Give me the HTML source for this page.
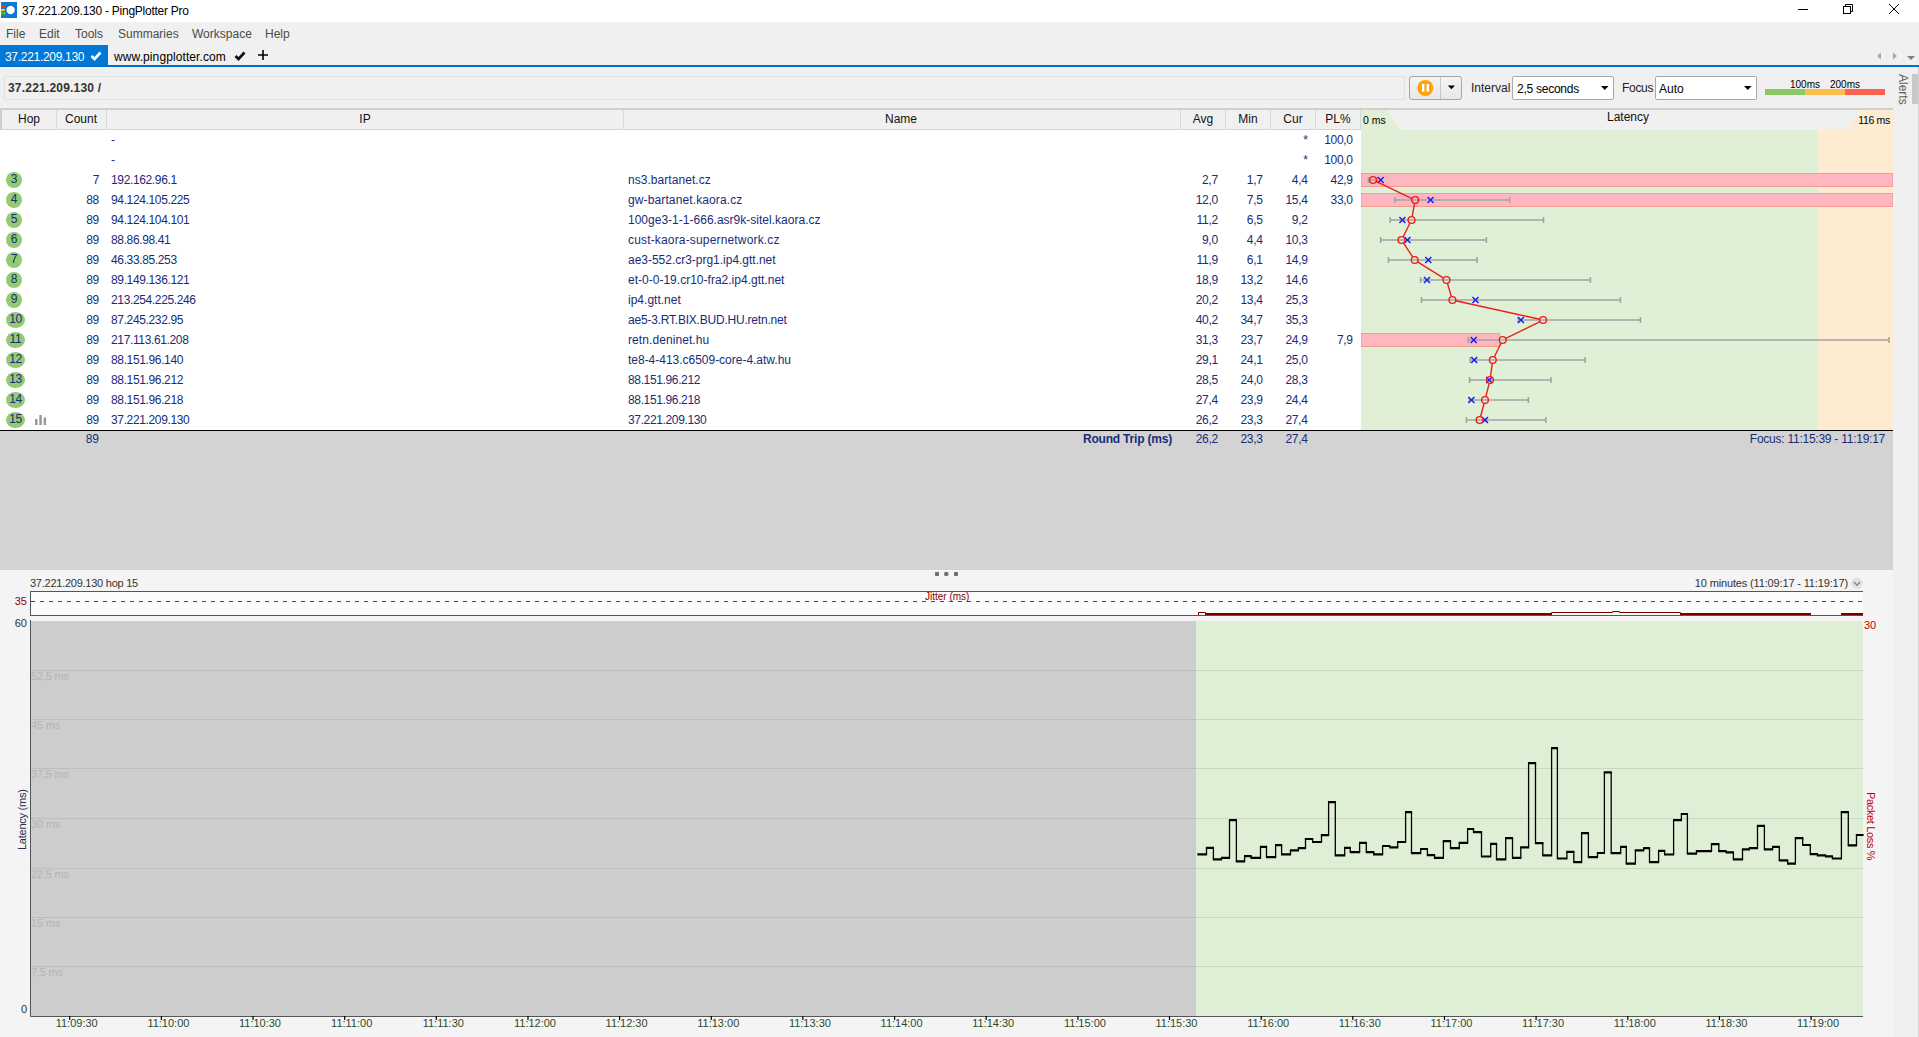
<!DOCTYPE html>
<html><head><meta charset="utf-8"><title>PingPlotter</title>
<style>
*{margin:0;padding:0;box-sizing:border-box}
html,body{width:1919px;height:1037px;overflow:hidden;background:#f0f0f0;font-family:"Liberation Sans",sans-serif;font-size:12px;color:#000}
.a{position:absolute;white-space:nowrap}
.n{color:#182c78}
.r{text-align:right}
.c{text-align:center}
</style></head><body>

<div class="a" style="left:0;top:0;width:1919px;height:22px;background:#fff"></div>
<svg class="a" style="left:0;top:0" width="20" height="20" viewBox="0 0 20 20"><rect x="1" y="2" width="16" height="16" fill="#0a7ad8"/><rect x="1" y="5.4" width="4.8" height="2.4" fill="#ff3010"/><rect x="1" y="9" width="3.8" height="2" fill="#ffc800"/><rect x="1" y="12" width="4.8" height="2.5" fill="#50c010"/><circle cx="10.6" cy="10" r="5.3" fill="#0068e8"/><circle cx="10.6" cy="10" r="4.2" fill="#fff"/></svg>
<div class="a" style="left:22px;top:3px;font-size:12px;line-height:16px;letter-spacing:-0.25px">37.221.209.130 - PingPlotter Pro</div>
<svg class="a" style="left:1790px;top:0" width="129" height="22" viewBox="1790 0 129 22"><line x1="1798" y1="9.5" x2="1808" y2="9.5" stroke="#000" stroke-width="1"/><rect x="1843.5" y="6.5" width="7" height="7" fill="#fff" stroke="#000" stroke-width="1"/><path d="M1845.5 6.5 V4.5 H1852.5 V11.5 H1850.5" fill="none" stroke="#000" stroke-width="1"/><path d="M1889 4 L1899 14 M1899 4 L1889 14" stroke="#000" stroke-width="1"/></svg>
<div class="a" style="left:6px;top:27px;line-height:15px;color:#4a4a4a">File</div>
<div class="a" style="left:39px;top:27px;line-height:15px;color:#4a4a4a">Edit</div>
<div class="a" style="left:75px;top:27px;line-height:15px;color:#4a4a4a">Tools</div>
<div class="a" style="left:118px;top:27px;line-height:15px;color:#4a4a4a">Summaries</div>
<div class="a" style="left:192px;top:27px;line-height:15px;color:#4a4a4a">Workspace</div>
<div class="a" style="left:265px;top:27px;line-height:15px;color:#4a4a4a">Help</div>
<div class="a" style="left:0;top:45px;width:108px;height:20px;background:#0078d7"></div>
<div class="a" style="left:5px;top:50px;color:#fff;line-height:15px;letter-spacing:-0.3px">37.221.209.130</div>
<svg class="a" style="left:90px;top:51px" width="12" height="10" viewBox="0 0 12 10"><path d="M1.5 5 L4.5 8 L10.5 1.5" fill="none" stroke="#fff" stroke-width="2.6"/></svg>
<div class="a" style="left:114px;top:50px;line-height:15px;letter-spacing:0.1px">www.pingplotter.com</div>
<svg class="a" style="left:234px;top:51px" width="12" height="10" viewBox="0 0 12 10"><path d="M1.5 5 L4.5 8 L10.5 1.5" fill="none" stroke="#111" stroke-width="2.6"/></svg>
<svg class="a" style="left:257px;top:49px" width="12" height="12" viewBox="0 0 12 12"><path d="M6 1 V11 M1 6 H11" stroke="#000" stroke-width="1.6"/></svg>
<svg class="a" style="left:1870px;top:50px" width="49" height="14" viewBox="1870 50 49 14"><path d="M1881 52.5 L1877 56 L1881 59.5Z" fill="#a8a8a8"/><path d="M1893 52.5 L1897 56 L1893 59.5Z" fill="#a8a8a8"/><path d="M1907 56 L1915 56 L1911 60Z" fill="#808080"/></svg>
<div class="a" style="left:0;top:65px;width:1919px;height:2px;background:#0070cd"></div>
<div class="a" style="left:4px;top:76px;width:1401px;height:24px;border:1px solid #e2e2e2;background:#f0f0f0"></div>
<div class="a" style="left:8px;top:81px;font-weight:bold;line-height:15px;color:#333;letter-spacing:0.2px">37.221.209.130 /</div>
<div class="a" style="left:1409px;top:76px;width:53px;height:24px;border:1px solid #a6a6a6;border-radius:3px;background:linear-gradient(#f4f4f4,#e8e8e8)"></div>
<div class="a" style="left:1440px;top:77px;width:1px;height:22px;background:#c8c8c8"></div>
<svg class="a" style="left:1416px;top:79px" width="48" height="18" viewBox="1416 79 48 18"><circle cx="1425.3" cy="88" r="8" fill="#ffa50a"/><rect x="1422" y="84" width="2.4" height="7.6" fill="#fff"/><rect x="1426.6" y="84" width="2.4" height="7.6" fill="#fff"/><path d="M1447.8 85.5 H1455 L1451.4 89.2Z" fill="#000"/></svg>
<div class="a" style="left:1471px;top:81px;line-height:15px;color:#222">Interval</div>
<div class="a" style="left:1512px;top:76px;width:102px;height:24px;border:1px solid #a9a9a9;border-radius:2px;background:#fff"></div>
<div class="a" style="left:1517px;top:82px;line-height:15px;letter-spacing:-0.25px">2,5 seconds</div>
<svg class="a" style="left:1600px;top:85px" width="10" height="6" viewBox="0 0 10 6"><path d="M1 1 H8.5 L4.75 5Z" fill="#000"/></svg>
<div class="a" style="left:1622px;top:81px;line-height:15px;color:#222;letter-spacing:-0.3px">Focus</div>
<div class="a" style="left:1655px;top:76px;width:102px;height:24px;border:1px solid #a9a9a9;border-radius:2px;background:#fff"></div>
<div class="a" style="left:1659px;top:82px;line-height:15px">Auto</div>
<svg class="a" style="left:1743px;top:85px" width="10" height="6" viewBox="0 0 10 6"><path d="M1 1 H8.5 L4.75 5Z" fill="#000"/></svg>
<div class="a" style="left:1765px;top:89px;width:40px;height:6px;background:#8cc864"></div>
<div class="a" style="left:1805px;top:89px;width:40px;height:6px;background:#fbbd4c"></div>
<div class="a" style="left:1845px;top:89px;width:40px;height:6px;background:#fb6350"></div>
<div class="a" style="left:1790px;top:78.5px;font-size:10px;line-height:12px">100ms</div>
<div class="a" style="left:1830px;top:78.5px;font-size:10px;line-height:12px">200ms</div>
<div class="a" style="left:1893px;top:67px;width:26px;height:970px;background:#f0f0f0"></div>
<div class="a" style="left:1912px;top:74px;width:6px;height:30px;background:#c8c8c8"></div>
<div class="a" style="left:1918px;top:67px;width:1px;height:970px;background:#d0d0d0"></div>
<div class="a" style="left:1897px;top:74px;width:12px;height:30px;"><div style="transform:rotate(90deg);transform-origin:0 0;position:absolute;left:12px;top:0;color:#606060;font-size:12px;line-height:12px">Alerts</div></div>
<div class="a" style="left:0;top:108px;width:1893px;height:2px;background:#cfcfcf"></div>
<div class="a" style="left:0;top:110px;width:1893px;height:20px;background:#f0f0f0;border-left:2px solid #cfcfcf"></div><div class="a" style="left:0;top:129px;width:1361px;height:1px;background:#d4d4d4"></div>
<div class="a" style="left:56px;top:110px;width:1px;height:19px;background:#d8d8d8"></div>
<div class="a" style="left:106px;top:110px;width:1px;height:19px;background:#d8d8d8"></div>
<div class="a" style="left:623px;top:110px;width:1px;height:19px;background:#d8d8d8"></div>
<div class="a" style="left:1180px;top:110px;width:1px;height:19px;background:#d8d8d8"></div>
<div class="a" style="left:1225px;top:110px;width:1px;height:19px;background:#d8d8d8"></div>
<div class="a" style="left:1270px;top:110px;width:1px;height:19px;background:#d8d8d8"></div>
<div class="a" style="left:1315px;top:110px;width:1px;height:19px;background:#d8d8d8"></div>
<div class="a" style="left:1360px;top:110px;width:1px;height:19px;background:#d8d8d8"></div>
<div class="a c" style="left:-21px;width:100px;top:112px;line-height:15px;color:#111">Hop</div>
<div class="a c" style="left:31px;width:100px;top:112px;line-height:15px;color:#111">Count</div>
<div class="a c" style="left:315px;width:100px;top:112px;line-height:15px;color:#111">IP</div>
<div class="a c" style="left:851px;width:100px;top:112px;line-height:15px;color:#111">Name</div>
<div class="a c" style="left:1153px;width:100px;top:112px;line-height:15px;color:#111">Avg</div>
<div class="a c" style="left:1198px;width:100px;top:112px;line-height:15px;color:#111">Min</div>
<div class="a c" style="left:1243px;width:100px;top:112px;line-height:15px;color:#111">Cur</div>
<div class="a c" style="left:1288px;width:100px;top:112px;line-height:15px;color:#111">PL%</div>
<div class="a" style="left:0;top:130px;width:1361px;height:300px;background:#fff"></div>
<div class="a n" style="left:111px;top:133px;line-height:15px;letter-spacing:-0.36px">-</div>
<div class="a r n" style="left:1247.6px;width:60px;top:133px;line-height:15px;letter-spacing:-0.3px">*</div>
<div class="a r n" style="left:1292.7px;width:60px;top:133px;line-height:15px;letter-spacing:-0.3px">100,0</div>
<div class="a n" style="left:111px;top:153px;line-height:15px;letter-spacing:-0.36px">-</div>
<div class="a r n" style="left:1247.6px;width:60px;top:153px;line-height:15px;letter-spacing:-0.3px">*</div>
<div class="a r n" style="left:1292.7px;width:60px;top:153px;line-height:15px;letter-spacing:-0.3px">100,0</div>
<div class="a c n" style="left:6px;top:172px;width:16px;height:16px;border-radius:50%;background:#92cb72;line-height:15px;font-size:12px;letter-spacing:-0.3px">3</div>
<div class="a r n" style="left:50px;width:49px;top:173px;line-height:15px;letter-spacing:-0.3px">7</div>
<div class="a n" style="left:111px;top:173px;line-height:15px;letter-spacing:-0.36px">192.162.96.1</div>
<div class="a n" style="left:628px;top:173px;line-height:15px;letter-spacing:0.048px">ns3.bartanet.cz</div>
<div class="a r n" style="left:1157.8px;width:60px;top:173px;line-height:15px;letter-spacing:-0.3px">2,7</div>
<div class="a r n" style="left:1202.6px;width:60px;top:173px;line-height:15px;letter-spacing:-0.3px">1,7</div>
<div class="a r n" style="left:1247.6px;width:60px;top:173px;line-height:15px;letter-spacing:-0.3px">4,4</div>
<div class="a r n" style="left:1292.7px;width:60px;top:173px;line-height:15px;letter-spacing:-0.3px">42,9</div>
<div class="a c n" style="left:6px;top:192px;width:16px;height:16px;border-radius:50%;background:#92cb72;line-height:15px;font-size:12px;letter-spacing:-0.3px">4</div>
<div class="a r n" style="left:50px;width:49px;top:193px;line-height:15px;letter-spacing:-0.3px">88</div>
<div class="a n" style="left:111px;top:193px;line-height:15px;letter-spacing:-0.36px">94.124.105.225</div>
<div class="a n" style="left:628px;top:193px;line-height:15px;letter-spacing:0.121px">gw-bartanet.kaora.cz</div>
<div class="a r n" style="left:1157.8px;width:60px;top:193px;line-height:15px;letter-spacing:-0.3px">12,0</div>
<div class="a r n" style="left:1202.6px;width:60px;top:193px;line-height:15px;letter-spacing:-0.3px">7,5</div>
<div class="a r n" style="left:1247.6px;width:60px;top:193px;line-height:15px;letter-spacing:-0.3px">15,4</div>
<div class="a r n" style="left:1292.7px;width:60px;top:193px;line-height:15px;letter-spacing:-0.3px">33,0</div>
<div class="a c n" style="left:6px;top:212px;width:16px;height:16px;border-radius:50%;background:#92cb72;line-height:15px;font-size:12px;letter-spacing:-0.3px">5</div>
<div class="a r n" style="left:50px;width:49px;top:213px;line-height:15px;letter-spacing:-0.3px">89</div>
<div class="a n" style="left:111px;top:213px;line-height:15px;letter-spacing:-0.36px">94.124.104.101</div>
<div class="a n" style="left:628px;top:213px;line-height:15px;letter-spacing:0.012px">100ge3-1-1-666.asr9k-sitel.kaora.cz</div>
<div class="a r n" style="left:1157.8px;width:60px;top:213px;line-height:15px;letter-spacing:-0.3px">11,2</div>
<div class="a r n" style="left:1202.6px;width:60px;top:213px;line-height:15px;letter-spacing:-0.3px">6,5</div>
<div class="a r n" style="left:1247.6px;width:60px;top:213px;line-height:15px;letter-spacing:-0.3px">9,2</div>
<div class="a c n" style="left:6px;top:232px;width:16px;height:16px;border-radius:50%;background:#92cb72;line-height:15px;font-size:12px;letter-spacing:-0.3px">6</div>
<div class="a r n" style="left:50px;width:49px;top:233px;line-height:15px;letter-spacing:-0.3px">89</div>
<div class="a n" style="left:111px;top:233px;line-height:15px;letter-spacing:-0.36px">88.86.98.41</div>
<div class="a n" style="left:628px;top:233px;line-height:15px;letter-spacing:0.165px">cust-kaora-supernetwork.cz</div>
<div class="a r n" style="left:1157.8px;width:60px;top:233px;line-height:15px;letter-spacing:-0.3px">9,0</div>
<div class="a r n" style="left:1202.6px;width:60px;top:233px;line-height:15px;letter-spacing:-0.3px">4,4</div>
<div class="a r n" style="left:1247.6px;width:60px;top:233px;line-height:15px;letter-spacing:-0.3px">10,3</div>
<div class="a c n" style="left:6px;top:252px;width:16px;height:16px;border-radius:50%;background:#92cb72;line-height:15px;font-size:12px;letter-spacing:-0.3px">7</div>
<div class="a r n" style="left:50px;width:49px;top:253px;line-height:15px;letter-spacing:-0.3px">89</div>
<div class="a n" style="left:111px;top:253px;line-height:15px;letter-spacing:-0.36px">46.33.85.253</div>
<div class="a n" style="left:628px;top:253px;line-height:15px;letter-spacing:-0.018px">ae3-552.cr3-prg1.ip4.gtt.net</div>
<div class="a r n" style="left:1157.8px;width:60px;top:253px;line-height:15px;letter-spacing:-0.3px">11,9</div>
<div class="a r n" style="left:1202.6px;width:60px;top:253px;line-height:15px;letter-spacing:-0.3px">6,1</div>
<div class="a r n" style="left:1247.6px;width:60px;top:253px;line-height:15px;letter-spacing:-0.3px">14,9</div>
<div class="a c n" style="left:6px;top:272px;width:16px;height:16px;border-radius:50%;background:#92cb72;line-height:15px;font-size:12px;letter-spacing:-0.3px">8</div>
<div class="a r n" style="left:50px;width:49px;top:273px;line-height:15px;letter-spacing:-0.3px">89</div>
<div class="a n" style="left:111px;top:273px;line-height:15px;letter-spacing:-0.36px">89.149.136.121</div>
<div class="a n" style="left:628px;top:273px;line-height:15px;letter-spacing:0.011px">et-0-0-19.cr10-fra2.ip4.gtt.net</div>
<div class="a r n" style="left:1157.8px;width:60px;top:273px;line-height:15px;letter-spacing:-0.3px">18,9</div>
<div class="a r n" style="left:1202.6px;width:60px;top:273px;line-height:15px;letter-spacing:-0.3px">13,2</div>
<div class="a r n" style="left:1247.6px;width:60px;top:273px;line-height:15px;letter-spacing:-0.3px">14,6</div>
<div class="a c n" style="left:6px;top:292px;width:16px;height:16px;border-radius:50%;background:#92cb72;line-height:15px;font-size:12px;letter-spacing:-0.3px">9</div>
<div class="a r n" style="left:50px;width:49px;top:293px;line-height:15px;letter-spacing:-0.3px">89</div>
<div class="a n" style="left:111px;top:293px;line-height:15px;letter-spacing:-0.36px">213.254.225.246</div>
<div class="a n" style="left:628px;top:293px;line-height:15px;letter-spacing:0.011px">ip4.gtt.net</div>
<div class="a r n" style="left:1157.8px;width:60px;top:293px;line-height:15px;letter-spacing:-0.3px">20,2</div>
<div class="a r n" style="left:1202.6px;width:60px;top:293px;line-height:15px;letter-spacing:-0.3px">13,4</div>
<div class="a r n" style="left:1247.6px;width:60px;top:293px;line-height:15px;letter-spacing:-0.3px">25,3</div>
<div class="a c n" style="left:6px;top:312px;width:19px;height:16px;border-radius:50%;background:#92cb72;line-height:15px;font-size:12px;letter-spacing:-0.3px">10</div>
<div class="a r n" style="left:50px;width:49px;top:313px;line-height:15px;letter-spacing:-0.3px">89</div>
<div class="a n" style="left:111px;top:313px;line-height:15px;letter-spacing:-0.36px">87.245.232.95</div>
<div class="a n" style="left:628px;top:313px;line-height:15px;letter-spacing:-0.212px">ae5-3.RT.BIX.BUD.HU.retn.net</div>
<div class="a r n" style="left:1157.8px;width:60px;top:313px;line-height:15px;letter-spacing:-0.3px">40,2</div>
<div class="a r n" style="left:1202.6px;width:60px;top:313px;line-height:15px;letter-spacing:-0.3px">34,7</div>
<div class="a r n" style="left:1247.6px;width:60px;top:313px;line-height:15px;letter-spacing:-0.3px">35,3</div>
<div class="a c n" style="left:6px;top:332px;width:19px;height:16px;border-radius:50%;background:#92cb72;line-height:15px;font-size:12px;letter-spacing:-0.3px">11</div>
<div class="a r n" style="left:50px;width:49px;top:333px;line-height:15px;letter-spacing:-0.3px">89</div>
<div class="a n" style="left:111px;top:333px;line-height:15px;letter-spacing:-0.36px">217.113.61.208</div>
<div class="a n" style="left:628px;top:333px;line-height:15px;letter-spacing:0.082px">retn.deninet.hu</div>
<div class="a r n" style="left:1157.8px;width:60px;top:333px;line-height:15px;letter-spacing:-0.3px">31,3</div>
<div class="a r n" style="left:1202.6px;width:60px;top:333px;line-height:15px;letter-spacing:-0.3px">23,7</div>
<div class="a r n" style="left:1247.6px;width:60px;top:333px;line-height:15px;letter-spacing:-0.3px">24,9</div>
<div class="a r n" style="left:1292.7px;width:60px;top:333px;line-height:15px;letter-spacing:-0.3px">7,9</div>
<div class="a c n" style="left:6px;top:352px;width:19px;height:16px;border-radius:50%;background:#92cb72;line-height:15px;font-size:12px;letter-spacing:-0.3px">12</div>
<div class="a r n" style="left:50px;width:49px;top:353px;line-height:15px;letter-spacing:-0.3px">89</div>
<div class="a n" style="left:111px;top:353px;line-height:15px;letter-spacing:-0.36px">88.151.96.140</div>
<div class="a n" style="left:628px;top:353px;line-height:15px;letter-spacing:-0.017px">te8-4-413.c6509-core-4.atw.hu</div>
<div class="a r n" style="left:1157.8px;width:60px;top:353px;line-height:15px;letter-spacing:-0.3px">29,1</div>
<div class="a r n" style="left:1202.6px;width:60px;top:353px;line-height:15px;letter-spacing:-0.3px">24,1</div>
<div class="a r n" style="left:1247.6px;width:60px;top:353px;line-height:15px;letter-spacing:-0.3px">25,0</div>
<div class="a c n" style="left:6px;top:372px;width:19px;height:16px;border-radius:50%;background:#92cb72;line-height:15px;font-size:12px;letter-spacing:-0.3px">13</div>
<div class="a r n" style="left:50px;width:49px;top:373px;line-height:15px;letter-spacing:-0.3px">89</div>
<div class="a n" style="left:111px;top:373px;line-height:15px;letter-spacing:-0.36px">88.151.96.212</div>
<div class="a n" style="left:628px;top:373px;line-height:15px;letter-spacing:-0.360px">88.151.96.212</div>
<div class="a r n" style="left:1157.8px;width:60px;top:373px;line-height:15px;letter-spacing:-0.3px">28,5</div>
<div class="a r n" style="left:1202.6px;width:60px;top:373px;line-height:15px;letter-spacing:-0.3px">24,0</div>
<div class="a r n" style="left:1247.6px;width:60px;top:373px;line-height:15px;letter-spacing:-0.3px">28,3</div>
<div class="a c n" style="left:6px;top:392px;width:19px;height:16px;border-radius:50%;background:#92cb72;line-height:15px;font-size:12px;letter-spacing:-0.3px">14</div>
<div class="a r n" style="left:50px;width:49px;top:393px;line-height:15px;letter-spacing:-0.3px">89</div>
<div class="a n" style="left:111px;top:393px;line-height:15px;letter-spacing:-0.36px">88.151.96.218</div>
<div class="a n" style="left:628px;top:393px;line-height:15px;letter-spacing:-0.360px">88.151.96.218</div>
<div class="a r n" style="left:1157.8px;width:60px;top:393px;line-height:15px;letter-spacing:-0.3px">27,4</div>
<div class="a r n" style="left:1202.6px;width:60px;top:393px;line-height:15px;letter-spacing:-0.3px">23,9</div>
<div class="a r n" style="left:1247.6px;width:60px;top:393px;line-height:15px;letter-spacing:-0.3px">24,4</div>
<div class="a c n" style="left:6px;top:412px;width:19px;height:16px;border-radius:50%;background:#92cb72;line-height:15px;font-size:12px;letter-spacing:-0.3px">15</div>
<div class="a r n" style="left:50px;width:49px;top:413px;line-height:15px;letter-spacing:-0.3px">89</div>
<div class="a n" style="left:111px;top:413px;line-height:15px;letter-spacing:-0.36px">37.221.209.130</div>
<div class="a n" style="left:628px;top:413px;line-height:15px;letter-spacing:-0.360px">37.221.209.130</div>
<div class="a r n" style="left:1157.8px;width:60px;top:413px;line-height:15px;letter-spacing:-0.3px">26,2</div>
<div class="a r n" style="left:1202.6px;width:60px;top:413px;line-height:15px;letter-spacing:-0.3px">23,3</div>
<div class="a r n" style="left:1247.6px;width:60px;top:413px;line-height:15px;letter-spacing:-0.3px">27,4</div>
<svg class="a" style="left:34px;top:414px" width="14" height="12" viewBox="34 414 14 12"><rect x="35" y="419" width="2.5" height="6" fill="#9a9a9a"/><rect x="39.3" y="415" width="2.5" height="10" fill="#9a9a9a"/><rect x="43.6" y="417.5" width="2.5" height="7.5" fill="#9a9a9a"/></svg>
<svg class="a" style="left:1361px;top:110px" width="532" height="320" viewBox="1361 110 532 320"><path d="M1361 110 H1386.5 L1400.5 130 H1361Z" fill="#dff0d6"/><rect x="1361" y="130" width="457" height="300" fill="#dff0d6"/><rect x="1818" y="130" width="75" height="300" fill="#fdebd2"/><path d="M1893 110 H1862 L1848 130 H1893Z" fill="#fdebd2"/><rect x="1361" y="173.5" width="532.0" height="13" fill="#ffb6c1" stroke="#f2907e" stroke-width="0.8"/><rect x="1361" y="193.5" width="532.0" height="13" fill="#ffb6c1" stroke="#f2907e" stroke-width="0.8"/><rect x="1361" y="333.5" width="138.3" height="13" fill="#ffb6c1" stroke="#f2907e" stroke-width="0.8"/><path d="M1368.4 180 H1377.0 M1368.4 177 V183 M1377.0 177 V183" stroke="#a3a3a3" stroke-width="1.6" fill="none"/><path d="M1377.7 177 L1383.7 183 M1383.7 177 L1377.7 183" stroke="#1a1aff" stroke-width="1.5"/><path d="M1394.7 200 H1509.6 M1394.7 197 V203 M1509.6 197 V203" stroke="#a3a3a3" stroke-width="1.6" fill="none"/><path d="M1427.6 197 L1433.6 203 M1433.6 197 L1427.6 203" stroke="#1a1aff" stroke-width="1.5"/><path d="M1390.2 220 H1543.5 M1390.2 217 V223 M1543.5 217 V223" stroke="#a3a3a3" stroke-width="1.6" fill="none"/><path d="M1399.4 217 L1405.4 223 M1405.4 217 L1399.4 223" stroke="#1a1aff" stroke-width="1.5"/><path d="M1380.7 240 H1486.3 M1380.7 237 V243 M1486.3 237 V243" stroke="#a3a3a3" stroke-width="1.6" fill="none"/><path d="M1404.4 237 L1410.4 243 M1410.4 237 L1404.4 243" stroke="#1a1aff" stroke-width="1.5"/><path d="M1388.4 260 H1477.0 M1388.4 257 V263 M1477.0 257 V263" stroke="#a3a3a3" stroke-width="1.6" fill="none"/><path d="M1425.3 257 L1431.3 263 M1431.3 257 L1425.3 263" stroke="#1a1aff" stroke-width="1.5"/><path d="M1420.6 280 H1590.4 M1420.6 277 V283 M1590.4 277 V283" stroke="#a3a3a3" stroke-width="1.6" fill="none"/><path d="M1424.0 277 L1430.0 283 M1430.0 277 L1424.0 283" stroke="#1a1aff" stroke-width="1.5"/><path d="M1421.5 300 H1620.4 M1421.5 297 V303 M1620.4 297 V303" stroke="#a3a3a3" stroke-width="1.6" fill="none"/><path d="M1472.5 297 L1478.5 303 M1478.5 297 L1472.5 303" stroke="#1a1aff" stroke-width="1.5"/><path d="M1518.2 320 H1640.5 M1518.2 317 V323 M1640.5 317 V323" stroke="#a3a3a3" stroke-width="1.6" fill="none"/><path d="M1517.9 317 L1523.9 323 M1523.9 317 L1517.9 323" stroke="#1a1aff" stroke-width="1.5"/><path d="M1468.3 340 H1889.0 M1468.3 337 V343 M1889.0 337 V343" stroke="#a3a3a3" stroke-width="1.6" fill="none"/><path d="M1470.7 337 L1476.7 343 M1476.7 337 L1470.7 343" stroke="#1a1aff" stroke-width="1.5"/><path d="M1470.1 360 H1585.2 M1470.1 357 V363 M1585.2 357 V363" stroke="#a3a3a3" stroke-width="1.6" fill="none"/><path d="M1471.2 357 L1477.2 363 M1477.2 357 L1471.2 363" stroke="#1a1aff" stroke-width="1.5"/><path d="M1469.6 380 H1551.0 M1469.6 377 V383 M1551.0 377 V383" stroke="#a3a3a3" stroke-width="1.6" fill="none"/><path d="M1486.1 377 L1492.1 383 M1492.1 377 L1486.1 383" stroke="#1a1aff" stroke-width="1.5"/><path d="M1469.2 400 H1528.3 M1469.2 397 V403 M1528.3 397 V403" stroke="#a3a3a3" stroke-width="1.6" fill="none"/><path d="M1468.4 397 L1474.4 403 M1474.4 397 L1468.4 403" stroke="#1a1aff" stroke-width="1.5"/><path d="M1466.4 420 H1545.8 M1466.4 417 V423 M1545.8 417 V423" stroke="#a3a3a3" stroke-width="1.6" fill="none"/><path d="M1482.0 417 L1488.0 423 M1488.0 417 L1482.0 423" stroke="#1a1aff" stroke-width="1.5"/><path d="M1376.03 181.46 L1412.08 198.54 M1414.55 203.35 L1412.13 216.65 M1410.01 223.04 L1403.06 236.96 M1403.41 242.84 L1412.83 257.16 M1417.58 261.81 L1443.59 278.19 M1447.43 283.26 L1451.41 296.74 M1455.69 300.73 L1539.81 319.27 M1540.08 321.51 L1505.79 338.49 M1501.22 343.04 L1494.27 356.96 M1492.30 363.37 L1490.49 376.63 M1489.21 383.30 L1485.86 396.70 M1484.15 403.28 L1480.49 416.72 " fill="none" stroke="#f21c1c" stroke-width="1.4"/><circle cx="1373.0" cy="180" r="3.4" fill="none" stroke="#f21c1c" stroke-width="1.4"/><circle cx="1415.2" cy="200" r="3.4" fill="none" stroke="#f21c1c" stroke-width="1.4"/><circle cx="1411.5" cy="220" r="3.4" fill="none" stroke="#f21c1c" stroke-width="1.4"/><circle cx="1401.5" cy="240" r="3.4" fill="none" stroke="#f21c1c" stroke-width="1.4"/><circle cx="1414.7" cy="260" r="3.4" fill="none" stroke="#f21c1c" stroke-width="1.4"/><circle cx="1446.5" cy="280" r="3.4" fill="none" stroke="#f21c1c" stroke-width="1.4"/><circle cx="1452.4" cy="300" r="3.4" fill="none" stroke="#f21c1c" stroke-width="1.4"/><circle cx="1543.1" cy="320" r="3.4" fill="none" stroke="#f21c1c" stroke-width="1.4"/><circle cx="1502.7" cy="340" r="3.4" fill="none" stroke="#f21c1c" stroke-width="1.4"/><circle cx="1492.8" cy="360" r="3.4" fill="none" stroke="#f21c1c" stroke-width="1.4"/><circle cx="1490.0" cy="380" r="3.4" fill="none" stroke="#f21c1c" stroke-width="1.4"/><circle cx="1485.0" cy="400" r="3.4" fill="none" stroke="#f21c1c" stroke-width="1.4"/><circle cx="1479.6" cy="420" r="3.4" fill="none" stroke="#f21c1c" stroke-width="1.4"/></svg>
<div class="a" style="left:1363px;top:113px;font-size:10.5px;line-height:14px">0 ms</div>
<div class="a" style="left:1607px;top:110px;line-height:15px;color:#111">Latency</div>
<div class="a r" style="left:1830px;width:60px;top:113px;font-size:10.5px;line-height:14px;letter-spacing:-0.3px">116 ms</div>
<div class="a" style="left:0;top:429.6px;width:1893px;height:1.5px;background:#000"></div>
<div class="a" style="left:0;top:431px;width:1893px;height:139px;background:#d3d3d3"></div>
<div class="a r n" style="left:50px;width:49px;top:432px;line-height:15px">89</div>
<div class="a r n" style="left:972px;width:200px;top:432px;line-height:15px;font-weight:bold;letter-spacing:-0.2px">Round Trip (ms)</div>
<div class="a r n" style="left:1157.8px;width:60px;top:432px;line-height:15px;letter-spacing:-0.3px">26,2</div>
<div class="a r n" style="left:1202.6px;width:60px;top:432px;line-height:15px;letter-spacing:-0.3px">23,3</div>
<div class="a r n" style="left:1247.6px;width:60px;top:432px;line-height:15px;letter-spacing:-0.3px">27,4</div>
<div class="a r n" style="left:1600px;width:285px;top:432px;line-height:15px;letter-spacing:-0.25px">Focus: 11:15:39 - 11:19:17</div>
<div class="a" style="left:0;top:570px;width:1893px;height:467px;background:#f4f4f4"></div>
<svg class="a" style="left:930px;top:570px" width="32" height="8" viewBox="930 570 32 8"><rect x="935" y="572" width="4" height="4" rx="0.8" fill="#6e6e6e"/><circle cx="946.3" cy="574" r="2.3" fill="#6e6e6e"/><rect x="954" y="572" width="4" height="4" rx="0.8" fill="#6e6e6e"/></svg>
<div class="a" style="left:30px;top:577px;font-size:11px;line-height:13px;color:#333;letter-spacing:-0.25px">37.221.209.130 hop 15</div>
<div class="a r" style="left:1600px;width:248px;top:577px;font-size:11px;line-height:13px;color:#333;letter-spacing:-0.15px">10 minutes (11:09:17 - 11:19:17)</div>
<svg class="a" style="left:1850px;top:576px" width="14" height="14" viewBox="0 0 14 14"><circle cx="7" cy="7.3" r="5.8" fill="#e2e2e2"/><path d="M4 6 L7 9.2 L10 6" fill="none" stroke="#858585" stroke-width="1.4"/></svg>
<div class="a" style="left:30px;top:591px;width:1833px;height:25px;background:#fbfbfb;border-top:1px solid #555;border-bottom:1px solid #555;border-left:1px solid #555"></div>
<svg class="a" style="left:30px;top:590px" width="1833" height="30" viewBox="30 590 1833 30"><line x1="31" y1="601.5" x2="1863" y2="601.5" stroke="#4a4a4a" stroke-width="1" stroke-dasharray="4,5"/><rect x="1206" y="613" width="346" height="2" fill="#7a0000"/><rect x="1681" y="613" width="130" height="2" fill="#7a0000"/><rect x="1841" y="613" width="22" height="2" fill="#7a0000"/><path d="M1198.5 615 V612.5 H1205.5 V615" fill="none" stroke="#7a0000" stroke-width="1"/><path d="M1551.5 615 V612.5 H1612.5 V611.5 H1619.5 V612.5 H1680.5 V615" fill="none" stroke="#7a0000" stroke-width="1"/></svg>
<div class="a" style="left:925px;top:591px;font-size:10px;line-height:12px;color:#8b0000">Jitter (ms)</div>
<div class="a r" style="left:0;width:27px;top:595px;font-size:11px;line-height:13px;color:#8b0000">35</div>
<svg class="a" style="left:0;top:600px" width="1893" height="437" viewBox="0 600 1893 437"><rect x="31" y="621" width="1165" height="395" fill="#cdcdcd"/><rect x="1196" y="621" width="667" height="395" fill="#dfefd5"/><line x1="31" y1="670.5" x2="1196" y2="670.5" stroke="#bdbdbd" stroke-width="1"/><line x1="1196" y1="670.5" x2="1863" y2="670.5" stroke="#c9d9c0" stroke-width="1"/><line x1="31" y1="719.5" x2="1196" y2="719.5" stroke="#bdbdbd" stroke-width="1"/><line x1="1196" y1="719.5" x2="1863" y2="719.5" stroke="#c9d9c0" stroke-width="1"/><line x1="31" y1="768.5" x2="1196" y2="768.5" stroke="#bdbdbd" stroke-width="1"/><line x1="1196" y1="768.5" x2="1863" y2="768.5" stroke="#c9d9c0" stroke-width="1"/><line x1="31" y1="818.5" x2="1196" y2="818.5" stroke="#bdbdbd" stroke-width="1"/><line x1="1196" y1="818.5" x2="1863" y2="818.5" stroke="#c9d9c0" stroke-width="1"/><line x1="31" y1="868.5" x2="1196" y2="868.5" stroke="#bdbdbd" stroke-width="1"/><line x1="1196" y1="868.5" x2="1863" y2="868.5" stroke="#c9d9c0" stroke-width="1"/><line x1="31" y1="917.5" x2="1196" y2="917.5" stroke="#bdbdbd" stroke-width="1"/><line x1="1196" y1="917.5" x2="1863" y2="917.5" stroke="#c9d9c0" stroke-width="1"/><line x1="31" y1="966.5" x2="1196" y2="966.5" stroke="#bdbdbd" stroke-width="1"/><line x1="1196" y1="966.5" x2="1863" y2="966.5" stroke="#c9d9c0" stroke-width="1"/><path d="M30.5 620 V1016.5 H1863" fill="none" stroke="#555" stroke-width="1"/><line x1="69.7" y1="1016" x2="69.7" y2="1020" stroke="#000" stroke-width="1.2"/><line x1="161.4" y1="1016" x2="161.4" y2="1020" stroke="#000" stroke-width="1.2"/><line x1="253.0" y1="1016" x2="253.0" y2="1020" stroke="#000" stroke-width="1.2"/><line x1="344.7" y1="1016" x2="344.7" y2="1020" stroke="#000" stroke-width="1.2"/><line x1="436.3" y1="1016" x2="436.3" y2="1020" stroke="#000" stroke-width="1.2"/><line x1="528.0" y1="1016" x2="528.0" y2="1020" stroke="#000" stroke-width="1.2"/><line x1="619.6" y1="1016" x2="619.6" y2="1020" stroke="#000" stroke-width="1.2"/><line x1="711.3" y1="1016" x2="711.3" y2="1020" stroke="#000" stroke-width="1.2"/><line x1="802.9" y1="1016" x2="802.9" y2="1020" stroke="#000" stroke-width="1.2"/><line x1="894.6" y1="1016" x2="894.6" y2="1020" stroke="#000" stroke-width="1.2"/><line x1="986.2" y1="1016" x2="986.2" y2="1020" stroke="#000" stroke-width="1.2"/><line x1="1077.9" y1="1016" x2="1077.9" y2="1020" stroke="#000" stroke-width="1.2"/><line x1="1169.5" y1="1016" x2="1169.5" y2="1020" stroke="#000" stroke-width="1.2"/><line x1="1261.2" y1="1016" x2="1261.2" y2="1020" stroke="#000" stroke-width="1.2"/><line x1="1352.8" y1="1016" x2="1352.8" y2="1020" stroke="#000" stroke-width="1.2"/><line x1="1444.5" y1="1016" x2="1444.5" y2="1020" stroke="#000" stroke-width="1.2"/><line x1="1536.1" y1="1016" x2="1536.1" y2="1020" stroke="#000" stroke-width="1.2"/><line x1="1627.8" y1="1016" x2="1627.8" y2="1020" stroke="#000" stroke-width="1.2"/><line x1="1719.4" y1="1016" x2="1719.4" y2="1020" stroke="#000" stroke-width="1.2"/><line x1="1811.1" y1="1016" x2="1811.1" y2="1020" stroke="#000" stroke-width="1.2"/><path d="M1197.4 854.4 H1207.1 M1205.9 847.8 H1214.0 M1212.8 859.3 H1222.1 M1220.9 857.9 H1230.1 M1228.9 820.2 H1237.0 M1235.8 861.4 H1245.2 M1244.0 856.1 H1251.7 M1250.5 857.9 H1261.1 M1259.9 846.9 H1267.1 M1265.9 857.2 H1276.2 M1275.0 845.2 H1282.2 M1281.0 854.4 H1291.1 M1289.9 850.3 H1299.0 M1297.8 848.2 H1306.1 M1304.9 839.0 H1313.2 M1312.0 842.0 H1322.1 M1320.9 835.1 H1329.2 M1328.0 802.1 H1335.9 M1334.7 855.4 H1345.3 M1344.1 847.8 H1350.9 M1349.7 852.2 H1360.2 M1359.0 842.8 H1366.9 M1365.7 852.2 H1374.3 M1373.1 854.4 H1383.2 M1382.0 846.0 H1390.3 M1389.1 847.3 H1398.3 M1397.1 842.0 H1406.2 M1405.0 812.2 H1412.1 M1410.9 853.1 H1421.3 M1420.1 849.0 H1428.0 M1426.8 855.2 H1435.1 M1433.9 857.9 H1444.0 M1442.8 841.1 H1451.1 M1449.9 848.2 H1459.9 M1458.7 842.8 H1468.2 M1467.0 829.0 H1474.1 M1472.9 832.2 H1482.1 M1480.9 856.5 H1491.3 M1490.1 843.9 H1497.1 M1495.9 859.3 H1506.3 M1505.1 838.1 H1513.1 M1511.9 857.9 H1521.4 M1520.2 847.3 H1529.2 M1528.0 763.2 H1536.1 M1534.9 843.2 H1543.4 M1542.2 855.4 H1552.2 M1551.0 748.1 H1558.0 M1556.8 858.5 H1567.5 M1566.3 851.8 H1574.4 M1573.2 862.2 H1582.2 M1581.0 833.1 H1589.0 M1587.8 857.2 H1598.1 M1596.9 853.0 H1605.0 M1603.8 772.4 H1611.8 M1610.6 853.2 H1621.3 M1620.1 846.8 H1626.9 M1625.7 863.6 H1636.0 M1634.8 850.3 H1644.3 M1643.1 848.1 H1650.1 M1648.9 862.2 H1659.2 M1658.0 850.8 H1665.2 M1664.0 854.5 H1674.2 M1673.0 820.2 H1682.0 M1680.8 814.0 H1688.0 M1686.8 853.6 H1697.1 M1695.9 851.2 H1712.1 M1710.9 844.1 H1719.4 M1718.2 851.2 H1726.7 M1725.5 852.3 H1734.0 M1732.8 859.4 H1743.1 M1741.9 849.4 H1750.0 M1748.8 848.1 H1758.1 M1756.9 825.8 H1765.0 M1763.8 849.4 H1773.2 M1772.0 846.8 H1779.9 M1778.7 860.3 H1788.2 M1787.0 863.6 H1796.0 M1794.8 838.1 H1803.3 M1802.1 845.0 H1810.9 M1809.7 854.1 H1817.9 M1816.7 855.4 H1826.1 M1824.9 856.3 H1833.0 M1831.8 858.5 H1842.0 M1840.8 812.2 H1848.9 M1847.7 845.4 H1857.1 M1855.9 835.0 H1863.6 " fill="none" stroke="#000" stroke-width="2.2"/><path d="M1206.5 854.0 V847.4 M1213.4 847.4 V858.9 M1221.5 858.9 V857.5 M1229.5 857.5 V819.8 M1236.4 819.8 V861.0 M1244.6 861.0 V855.7 M1251.1 855.7 V857.5 M1260.5 857.5 V846.5 M1266.5 846.5 V856.8 M1275.6 856.8 V844.8 M1281.6 844.8 V854.0 M1290.5 854.0 V849.9 M1298.4 849.9 V847.8 M1305.5 847.8 V838.6 M1312.6 838.6 V841.6 M1321.5 841.6 V834.7 M1328.6 834.7 V801.7 M1335.3 801.7 V855.0 M1344.7 855.0 V847.4 M1350.3 847.4 V851.8 M1359.6 851.8 V842.4 M1366.3 842.4 V851.8 M1373.7 851.8 V854.0 M1382.6 854.0 V845.6 M1389.7 845.6 V846.9 M1397.7 846.9 V841.6 M1405.6 841.6 V811.8 M1411.5 811.8 V852.7 M1420.7 852.7 V848.6 M1427.4 848.6 V854.8 M1434.5 854.8 V857.5 M1443.4 857.5 V840.7 M1450.5 840.7 V847.8 M1459.3 847.8 V842.4 M1467.6 842.4 V828.6 M1473.5 828.6 V831.8 M1481.5 831.8 V856.1 M1490.7 856.1 V843.5 M1496.5 843.5 V858.9 M1505.7 858.9 V837.7 M1512.5 837.7 V857.5 M1520.8 857.5 V846.9 M1528.6 846.9 V762.8 M1535.5 762.8 V842.8 M1542.8 842.8 V855.0 M1551.6 855.0 V747.7 M1557.4 747.7 V858.1 M1566.9 858.1 V851.4 M1573.8 851.4 V861.8 M1581.6 861.8 V832.7 M1588.4 832.7 V856.8 M1597.5 856.8 V852.6 M1604.4 852.6 V772.0 M1611.2 772.0 V852.8 M1620.7 852.8 V846.4 M1626.3 846.4 V863.2 M1635.4 863.2 V849.9 M1643.7 849.9 V847.7 M1649.5 847.7 V861.8 M1658.6 861.8 V850.4 M1664.6 850.4 V854.1 M1673.6 854.1 V819.8 M1681.4 819.8 V813.6 M1687.4 813.6 V853.2 M1696.5 853.2 V850.8 M1711.5 850.8 V843.7 M1718.8 843.7 V850.8 M1726.1 850.8 V851.9 M1733.4 851.9 V859.0 M1742.5 859.0 V849.0 M1749.4 849.0 V847.7 M1757.5 847.7 V825.4 M1764.4 825.4 V849.0 M1772.6 849.0 V846.4 M1779.3 846.4 V859.9 M1787.6 859.9 V863.2 M1795.4 863.2 V837.7 M1802.7 837.7 V844.6 M1810.3 844.6 V853.7 M1817.3 853.7 V855.0 M1825.5 855.0 V855.9 M1832.4 855.9 V858.1 M1841.4 858.1 V811.8 M1848.3 811.8 V845.0 M1856.5 845.0 V834.6 " fill="none" stroke="#000" stroke-width="1.3"/></svg>
<div class="a c" style="left:36.7px;width:80px;top:1017px;font-size:11px;line-height:13px;color:#2a4a2a">11:09:30</div>
<div class="a c" style="left:128.4px;width:80px;top:1017px;font-size:11px;line-height:13px;color:#2a4a2a">11:10:00</div>
<div class="a c" style="left:220.0px;width:80px;top:1017px;font-size:11px;line-height:13px;color:#2a4a2a">11:10:30</div>
<div class="a c" style="left:311.7px;width:80px;top:1017px;font-size:11px;line-height:13px;color:#2a4a2a">11:11:00</div>
<div class="a c" style="left:403.3px;width:80px;top:1017px;font-size:11px;line-height:13px;color:#2a4a2a">11:11:30</div>
<div class="a c" style="left:495.0px;width:80px;top:1017px;font-size:11px;line-height:13px;color:#2a4a2a">11:12:00</div>
<div class="a c" style="left:586.6px;width:80px;top:1017px;font-size:11px;line-height:13px;color:#2a4a2a">11:12:30</div>
<div class="a c" style="left:678.3px;width:80px;top:1017px;font-size:11px;line-height:13px;color:#2a4a2a">11:13:00</div>
<div class="a c" style="left:769.9px;width:80px;top:1017px;font-size:11px;line-height:13px;color:#2a4a2a">11:13:30</div>
<div class="a c" style="left:861.6px;width:80px;top:1017px;font-size:11px;line-height:13px;color:#2a4a2a">11:14:00</div>
<div class="a c" style="left:953.2px;width:80px;top:1017px;font-size:11px;line-height:13px;color:#2a4a2a">11:14:30</div>
<div class="a c" style="left:1044.9px;width:80px;top:1017px;font-size:11px;line-height:13px;color:#2a4a2a">11:15:00</div>
<div class="a c" style="left:1136.5px;width:80px;top:1017px;font-size:11px;line-height:13px;color:#2a4a2a">11:15:30</div>
<div class="a c" style="left:1228.2px;width:80px;top:1017px;font-size:11px;line-height:13px;color:#2a4a2a">11:16:00</div>
<div class="a c" style="left:1319.8px;width:80px;top:1017px;font-size:11px;line-height:13px;color:#2a4a2a">11:16:30</div>
<div class="a c" style="left:1411.5px;width:80px;top:1017px;font-size:11px;line-height:13px;color:#2a4a2a">11:17:00</div>
<div class="a c" style="left:1503.1px;width:80px;top:1017px;font-size:11px;line-height:13px;color:#2a4a2a">11:17:30</div>
<div class="a c" style="left:1594.8px;width:80px;top:1017px;font-size:11px;line-height:13px;color:#2a4a2a">11:18:00</div>
<div class="a c" style="left:1686.4px;width:80px;top:1017px;font-size:11px;line-height:13px;color:#2a4a2a">11:18:30</div>
<div class="a c" style="left:1778.1px;width:80px;top:1017px;font-size:11px;line-height:13px;color:#2a4a2a">11:19:00</div>
<div class="a" style="left:31px;top:670px;font-size:11px;line-height:13px;color:#b4b4b4;letter-spacing:-0.2px">52,5 ms</div>
<div class="a" style="left:31px;top:719px;font-size:11px;line-height:13px;color:#b4b4b4;letter-spacing:-0.2px">45 ms</div>
<div class="a" style="left:31px;top:768px;font-size:11px;line-height:13px;color:#b4b4b4;letter-spacing:-0.2px">37,5 ms</div>
<div class="a" style="left:31px;top:818px;font-size:11px;line-height:13px;color:#b4b4b4;letter-spacing:-0.2px">30 ms</div>
<div class="a" style="left:31px;top:868px;font-size:11px;line-height:13px;color:#b4b4b4;letter-spacing:-0.2px">22,5 ms</div>
<div class="a" style="left:31px;top:917px;font-size:11px;line-height:13px;color:#b4b4b4;letter-spacing:-0.2px">15 ms</div>
<div class="a" style="left:31px;top:966px;font-size:11px;line-height:13px;color:#b4b4b4;letter-spacing:-0.2px">7,5 ms</div>
<div class="a r" style="left:0;width:27px;top:617px;font-size:11px;line-height:13px;color:#333">60</div>
<div class="a r" style="left:0;width:27px;top:1003px;font-size:11px;line-height:13px;color:#333">0</div>
<div class="a" style="left:1864px;top:618.5px;font-size:11px;line-height:13px;color:#c00000">30</div>
<div class="a" style="left:16px;top:790px;width:13px;height:60px"><div style="position:absolute;left:0;top:60px;transform:rotate(-90deg);transform-origin:0 0;font-size:11px;line-height:13px;color:#2a2a4a;letter-spacing:-0.25px">Latency (ms)</div></div>
<div class="a" style="left:1864px;top:792px;width:13px;height:66px"><div style="position:absolute;left:13px;top:0;transform:rotate(90deg);transform-origin:0 0;font-size:11px;line-height:13px;color:#c00000;letter-spacing:-0.35px">Packet Loss %</div></div>
</body></html>
